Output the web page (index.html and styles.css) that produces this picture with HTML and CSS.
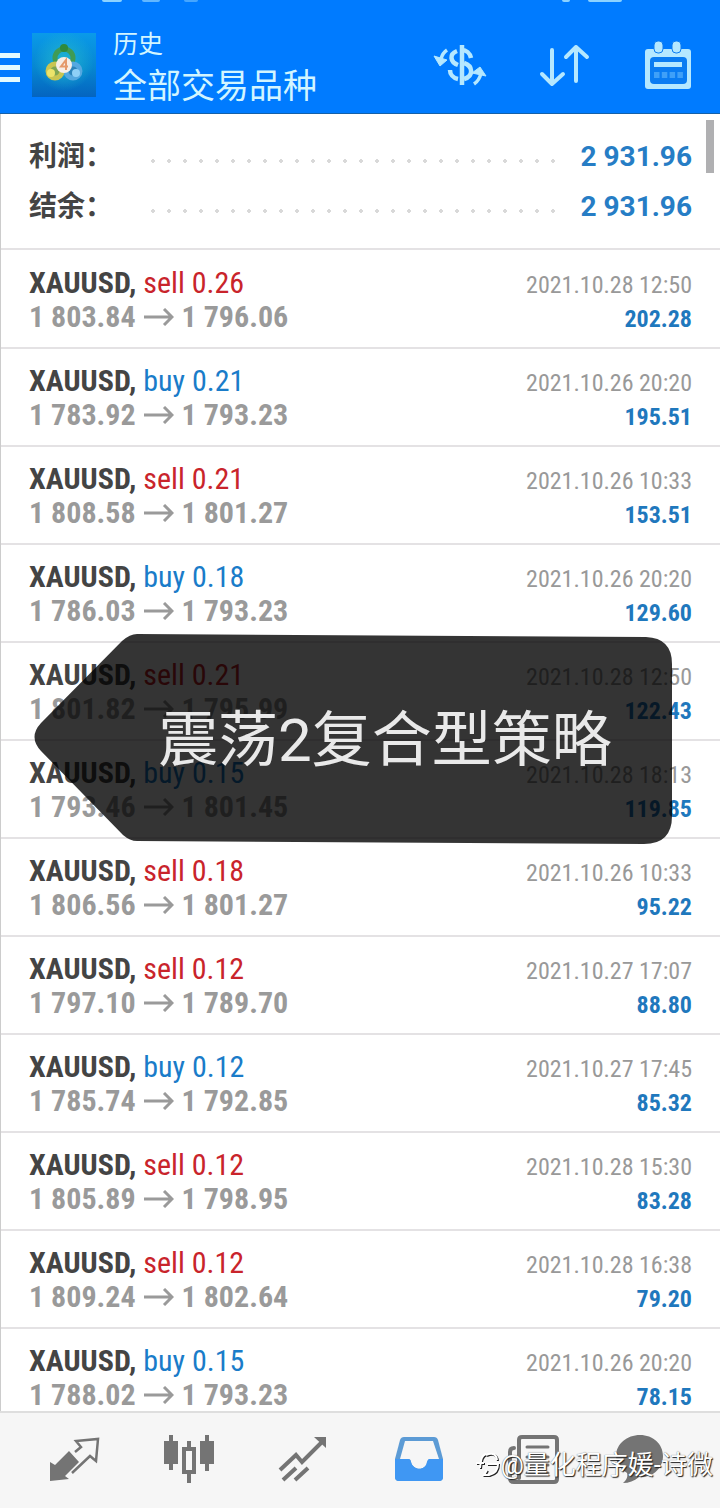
FILE: index.html
```
<!DOCTYPE html>
<html lang="zh-CN">
<head>
<meta charset="utf-8">
<meta name="viewport" content="width=device-width, initial-scale=1">
<title>历史</title>
<link rel="stylesheet" href="styles.css">
</head>
<body>
<header class="topbar">
  <div class="status" aria-hidden="true"><i class="s1"></i><i class="s2"></i><i class="s3"></i><i class="s4"></i><i class="s5"></i></div>
  <button class="menu" aria-label="菜单"><span></span><span></span><span></span></button>
  <svg class="logo" viewBox="0 0 64 64" aria-hidden="true">
    <defs>
      <linearGradient id="bg" x1="0" y1="0" x2="0" y2="1"><stop offset="0" stop-color="#0a9ae9"/><stop offset=".55" stop-color="#0686d0"/><stop offset="1" stop-color="#0464c0"/></linearGradient>
      <radialGradient id="glow"><stop offset="0" stop-color="#21b5cf"/><stop offset="1" stop-color="#21b5cf" stop-opacity="0"/></radialGradient>
    </defs>
    <rect width="64" height="64" fill="url(#bg)"/>
    <circle cx="32" cy="28" r="30" fill="url(#glow)"/>
    <circle cx="32" cy="25" r="9" fill="none" stroke="#3f9b55" stroke-width="5"/>
    <circle cx="23" cy="38" r="7" fill="#7fa653" stroke="#c9c552" stroke-width="5"/>
    <circle cx="41" cy="38" r="7" fill="#2b83bb" stroke="#55a8e0" stroke-width="5"/>
    <circle cx="32" cy="15" r="4" fill="#2f8a3c"/><circle cx="19" cy="40" r="4" fill="#ece46a"/><circle cx="44" cy="40" r="4" fill="#8fd0f7"/>
    <circle cx="32" cy="32" r="8" fill="#f6eee6"/>
    <path d="M34 37V27L29 33.500h7" fill="none" stroke="#e59a6b" stroke-width="2"/>
  </svg>
  <div class="titles"><p class="section">历史</p><h1>全部交易品种</h1></div>
  <div class="actions">
    <button aria-label="货币"><svg width="56" height="48" viewBox="0 0 56 48" fill="none" stroke="#b5e8ff" stroke-width="4.500">
      <path d="M30 4v40" stroke-width="4.500"/><path d="M39 17c-1-5-5-8-9-8M25 10c-8 3-7 11 1 14M32 22c9 3 10 13 0 16M26 38c-5-1-8-5-8-9"/><path d="M15 9c-3 2-5 5-6 9M42 43c3-2 6-6 7-11" stroke-width="3.500"/><path d="M2 15l13 4-7 6zM40 32l8-6 6 9z" fill="#b5e8ff" stroke-width="1"/>
    </svg></button>
    <button aria-label="排序"><svg width="56" height="48" viewBox="0 0 56 48" fill="none" stroke="#b5e8ff" stroke-width="4" stroke-linecap="round" stroke-linejoin="round"><path d="M16 9v34M6 33l10 10 11-10M40 40V6M30 16L40 6l11 10"/></svg></button>
    <button aria-label="日历"><svg width="56" height="48" viewBox="0 0 56 48"><rect x="5" y="8" width="46" height="40" rx="3" fill="#b5e8ff"/><rect x="10" y="16" width="37" height="27" rx="4" fill="#0a7cf2"/><rect x="14" y="21" width="28" height="5" fill="#b5e8ff"/><path d="M14 34h29" stroke="#3fa0f8" stroke-width="6" stroke-dasharray="5.500 2.300"/><rect x="14" y="0" width="9" height="12" rx="4" fill="#b5e8ff" stroke="#0a7cf2"/><rect x="32" y="0" width="9" height="12" rx="4" fill="#b5e8ff" stroke="#0a7cf2"/></svg></button>
  </div>
</header>
<main class="history">
  <dl class="summary">
    <div><dt>利润：</dt><dd class="dots"></dd><dd class="total">2 931.96</dd></div>
    <div><dt>结余：</dt><dd class="dots"></dd><dd class="total">2 931.96</dd></div>
  </dl>
  <span class="scrollbar"></span>
  <ul class="deals" id="deals"></ul>
  <div class="banner">
    <svg viewBox="0 0 638 210" preserveAspectRatio="none" aria-hidden="true"><path d="M103 0L612 3Q638 4 638 30V182Q638 210 610 210L103 207Q96 207 89 201L7 117Q-6 103 7 89L88 7Q96 0 103 0Z" fill="#000" fill-opacity=".795"/></svg>
    <p>震荡2复合型策略</p>
  </div>
</main>
<nav class="tabs">
  <button aria-label="行情"><svg viewBox="0 0 56 56"><path d="M4 27l5 3 14-14 10 11-14 14 4 3-19 2z" fill="#747474"/><path d="M29 17l6-5-5-6 22-2-2 22-6-5-18 17" fill="none" stroke="#747474" stroke-width="2.500"/></svg></button>
  <button aria-label="图表"><svg viewBox="0 0 56 56" fill="#747474"><path d="M3 6h14v23H3zM8 0h4v35H8zM39 6h14v23H39zM44 0h4v36h-4zM26 6h4v8h-4zM26 38h4v10h-4z"/><path d="M23 14h10v23H23z" fill="none" stroke="#747474" stroke-width="4"/></svg></button>
  <button aria-label="交易"><svg viewBox="0 0 56 56" fill="none" stroke="#747474" stroke-width="4"><path d="M4 35l16-15 6 7L48 5M7 45l13-12M19 45l13-12"/><path d="M38 2h12v11z" fill="#747474" stroke="none"/></svg></button>
  <button aria-label="历史" aria-current="page"><svg viewBox="0 0 56 56"><path d="M13 2h30q3 0 4 3l5 19v18q0 4-4 4H8q-4 0-4-4V24L9 5q1-3 4-3z" fill="#5c9bd5"/><path d="M14 6h28l6 18h-8q-3 0-4 3c-1 9-14 9-16 0q0-3-3-3H9z" fill="#f6f6f6"/><path d="M4 24h14q1 0 2 3c2 9 15 9 16 0q1-3 2-3h14v18q0 4-4 4H8q-4 0-4-4z" fill="#3f97f3"/></svg></button>
  <button aria-label="新闻"><svg viewBox="0 0 56 56" fill="none" stroke="#747474" stroke-width="4" stroke-linecap="round"><path d="M16 2h32q3 0 3 3v39q0 3-3 3H8q-4 0-4-4V17q0-4 4-4M13 43V5q0-3 3-3"/><path d="M21 12h21M21 22h21M21 30h21M21 38h21" stroke-width="3"/></svg></button>
  <button aria-label="消息"><svg viewBox="0 0 56 56"><path d="M19 0c13 0 23 9 23 21S32 43 18 42c-5 4-10 6-16 6 4-3 5-7 4-10C-2 33-5 27-5 21-5 9 6 0 19 0z" fill="#747474"/></svg></button>
</nav>
<div class="watermark"><svg width="24" height="28" viewBox="0 0 24 28" fill="none" stroke="#fff" stroke-width="2"><path d="M10 3C6 4 5 8 4 17M0 12h8M10 4q10-4 11 5M11 13h11q0 9-9 11H8l3-5"/></svg><span>@量化程序媛-诗微</span></div>
<script src="deals.js"></script>
</body>
</html>
```
FILE: styles.css
```
* { box-sizing: border-box; }
html, body { height: 100%; }
body { margin: 0; display: flex; flex-direction: column; position: relative; overflow: hidden; background: #fff; font-family: Roboto, "Noto Sans CJK SC", sans-serif; color: #444; }
button { border: 0; padding: 0; margin: 0; background: none; display: grid; place-items: center; }
p, h1, dl, dd, ul { margin: 0; padding: 0; }
.topbar { position: relative; flex: none; display: flex; align-items: center; padding: 16px 24px 0 0; height: 114px; background: #007bff; border-bottom: 1px solid #1560a8; color: #d2f5ff; }
.status i { position: absolute; top: 0; height: 2px; border-radius: 0 0 3px 3px; background: #8cd2ff; }
.status .s1 { left: 102px; width: 20px; }
.status .s2 { left: 142px; width: 18px; opacity: .7; }
.status .s3 { left: 184px; width: 14px; opacity: .5; }
.status .s4 { right: 150px; width: 8px; }
.status .s5 { right: 98px; width: 34px; }
.menu { width: 20px; gap: 7px; margin-right: 12px; margin-top: 5px; }
.menu span { display: block; width: 20px; height: 5px; background: #e2faff; }
.logo { width: 64px; height: 64px; flex: none; }
.titles { margin-left: 17px; padding-top: 6px; flex: 1; white-space: nowrap; }
.section { font-size: 25px; line-height: 36px; }
h1 { font-size: 34px; line-height: 46px; font-weight: 400; }
.actions { display: flex; gap: 48px; }
.history { position: relative; flex: 1; min-height: 0; overflow: hidden; border-left: 1px solid #ccc; }
.summary { padding: 18px 28px 16px; border-bottom: 2px solid #e4e2e4; margin-bottom: 1px; font-size: 28px; font-weight: 700; }
.summary div { display: flex; align-items: center; line-height: 50px; }
.summary dt { width: 116px; }
.dots { flex: 1; height: 4px; margin: 8px 20px 0 0; background: radial-gradient(circle, #d9d9d9 2px, transparent 2px) 0 0 / 16px 4px; }
.total { color: #267dc5; }
.scrollbar { position: absolute; top: 6px; right: 6px; width: 8px; height: 53px; background: #b0b0b2; }
.deals { list-style: none; font-family: "Roboto Condensed", "Liberation Sans Narrow", Roboto, sans-serif; }
.deal { display: grid; grid-template-columns: 1fr auto; padding: 15px 28px 13px; border-bottom: 2px solid #e4e2e4; line-height: 34px; font-size: 30px; white-space: nowrap; }
.deal time { text-align: right; font-size: 24px; line-height: 38px; color: #999; }
.deal > * { height: 34px; }
.deal strong { color: #444; }
.sell { color: #c9242b; }
.buy { color: #1a7cc9; }
.prices { display: flex; align-items: center; gap: 8px; color: #9a9a9a; font-weight: 700; }
.prices svg { width: 30px; height: 18px; }
.profit { text-align: right; font-size: 24px; line-height: 38px; font-weight: 700; color: #1f78bd; }
.banner { position: absolute; top: 520px; left: 33px; right: 48px; height: 210px; display: grid; place-items: center; }
.banner svg { position: absolute; width: 100%; height: 100%; }
.banner p { position: relative; padding: 4px 0 0 64px; font-size: 60px; line-height: 88px; color: #e9e9e9; white-space: nowrap; }
.tabs { flex: none; height: 97px; display: grid; grid-template-columns: repeat(6, 1fr); padding: 4px 14px 0 16px; background: #f6f6f6; border-top: 2px solid #dedede; }
.tabs svg { width: 56px; height: 56px; overflow: visible; }
.watermark { position: absolute; right: 7px; bottom: 25px; display: flex; align-items: center; color: #fff; font-size: 26px; line-height: 36px; text-shadow: 1px 1px 1px #222, 0 0 1px #555; white-space: nowrap; }
.watermark svg { filter: drop-shadow(1px 1px 0 #222); }
```
FILE: deals.js
```
const deals = [
  ["sell", "0.26", "1 803.84", "1 796.06", "2021.10.28 12:50", "202.28"],
  ["buy", "0.21", "1 783.92", "1 793.23", "2021.10.26 20:20", "195.51"],
  ["sell", "0.21", "1 808.58", "1 801.27", "2021.10.26 10:33", "153.51"],
  ["buy", "0.18", "1 786.03", "1 793.23", "2021.10.26 20:20", "129.60"],
  ["sell", "0.21", "1 801.82", "1 795.99", "2021.10.28 12:50", "122.43"],
  ["buy", "0.15", "1 793.46", "1 801.45", "2021.10.28 18:13", "119.85"],
  ["sell", "0.18", "1 806.56", "1 801.27", "2021.10.26 10:33", "95.22"],
  ["sell", "0.12", "1 797.10", "1 789.70", "2021.10.27 17:07", "88.80"],
  ["buy", "0.12", "1 785.74", "1 792.85", "2021.10.27 17:45", "85.32"],
  ["sell", "0.12", "1 805.89", "1 798.95", "2021.10.28 15:30", "83.28"],
  ["sell", "0.12", "1 809.24", "1 802.64", "2021.10.28 16:38", "79.20"],
  ["buy", "0.15", "1 788.02", "1 793.23", "2021.10.26 20:20", "78.15"]
];
const arrow = '<svg viewBox="0 0 30 18" fill="none" stroke="#9a9a9a" stroke-width="3" role="img" aria-label="至"><path d="M0 9h28M20 1l8 8-8 8"/></svg>';
document.getElementById("deals").innerHTML = deals.map(([side, lots, from, to, time, profit]) => `
  <li class="deal">
    <div><strong>XAUUSD,</strong> <span class="${side}">${side} ${lots}</span></div>
    <time>${time}</time>
    <div class="prices"><span>${from}</span>${arrow}<span>${to}</span></div>
    <div class="profit">${profit}</div>
  </li>`).join("");
```
